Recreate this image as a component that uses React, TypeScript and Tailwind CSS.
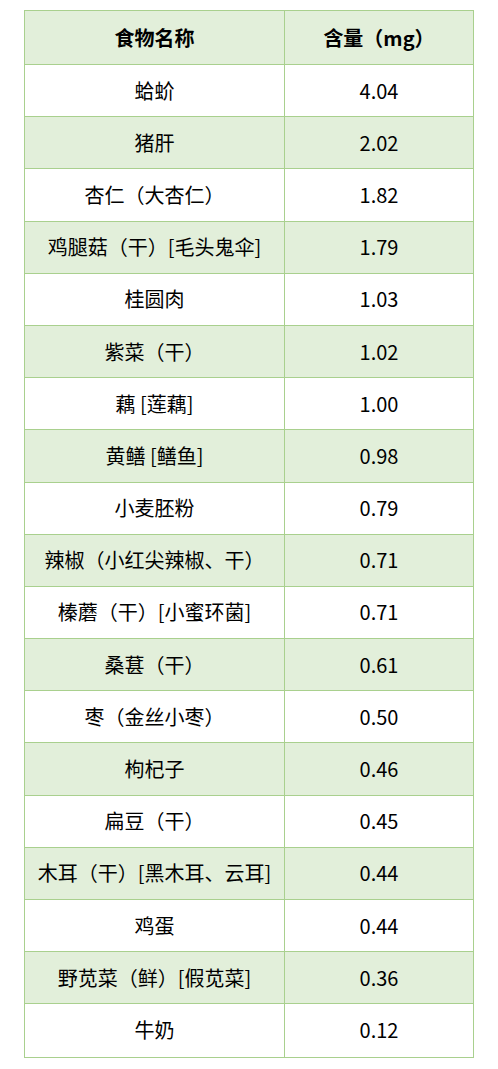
import React from "react";

const rows: [string, string][] = [
  ["蛤蚧", "4.04"],
  ["猪肝", "2.02"],
  ["杏仁（大杏仁）", "1.82"],
  ["鸡腿菇（干）[毛头鬼伞]", "1.79"],
  ["桂圆肉", "1.03"],
  ["紫菜（干）", "1.02"],
  ["藕 [莲藕]", "1.00"],
  ["黄鳝 [鳝鱼]", "0.98"],
  ["小麦胚粉", "0.79"],
  ["辣椒（小红尖辣椒、干）", "0.71"],
  ["榛蘑（干）[小蜜环菌]", "0.71"],
  ["桑葚（干）", "0.61"],
  ["枣（金丝小枣）", "0.50"],
  ["枸杞子", "0.46"],
  ["扁豆（干）", "0.45"],
  ["木耳（干）[黑木耳、云耳]", "0.44"],
  ["鸡蛋", "0.44"],
  ["野苋菜（鲜）[假苋菜]", "0.36"],
  ["牛奶", "0.12"],
];

export default function App() {
  return (
    <div
      className="w-[498px] h-[1069px] bg-white pt-[10px] pl-[24px]"
      style={{ fontFamily: '"Noto Sans CJK SC", "Microsoft YaHei", sans-serif' }}
    >
      <div className="w-[450px] border border-[#a9d08e] text-[20px] text-black [text-spacing-trim:space-all]">
        <div className="flex h-[54px] bg-[#e2efda] font-bold border-b border-[#a9d08e]">
          <div className="w-[260px] flex items-center justify-center border-r border-[#a9d08e]">
            食物名称
          </div>
          <div className="flex-1 flex items-center justify-center">含量（mg）</div>
        </div>
        {rows.map(([name, val], i) => (
          <div
            key={i}
            className={
              "flex h-[52.2px] " +
              (i % 2 === 1 ? "bg-[#e2efda] " : "bg-white ") +
              (i < rows.length - 1 ? "border-b border-[#a9d08e]" : "")
            }
          >
            <div className="w-[260px] flex items-center justify-center border-r border-[#a9d08e] whitespace-nowrap">
              {name}
            </div>
            <div className="flex-1 flex items-center justify-center">{val}</div>
          </div>
        ))}
      </div>
    </div>
  );
}
